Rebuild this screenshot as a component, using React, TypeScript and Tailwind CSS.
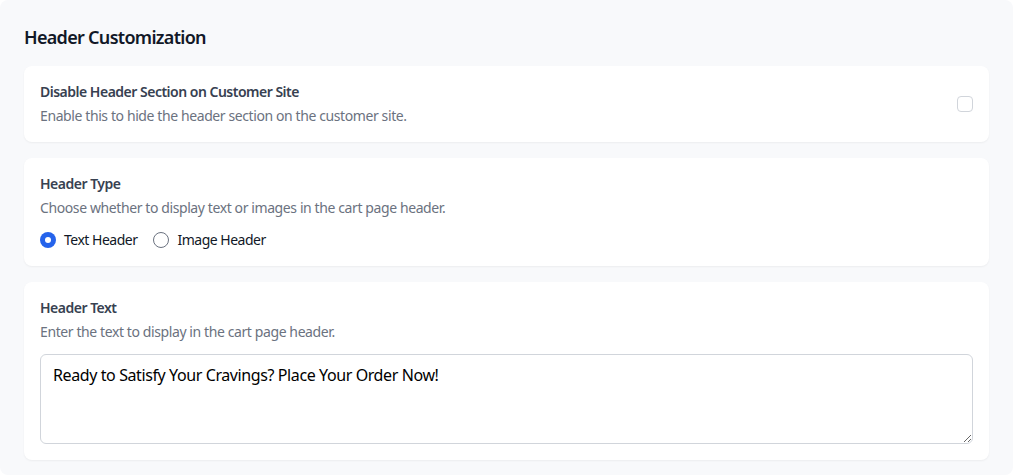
import { useState } from 'react'

const font = { fontFamily: '"Noto Sans", "Open Sans", sans-serif' }

function Card({ children, className = '' }: { children: React.ReactNode; className?: string }) {
  return (
    <div className={`rounded-lg bg-white p-4 shadow-[0_1px_2px_rgba(0,0,0,0.05)] ${className}`}>
      {children}
    </div>
  )
}

function Title({ children }: { children: React.ReactNode }) {
  return <p className="text-sm leading-5 font-semibold tracking-[-0.5px] text-[#374151]">{children}</p>
}

function Radio({ checked, label, onClick }: { checked: boolean; label: string; onClick: () => void }) {
  return (
    <label className="flex items-center gap-2 cursor-pointer" onClick={onClick}>
      {checked ? (
        <span className="flex h-4 w-4 items-center justify-center rounded-full bg-[#2563eb]">
          <span className="h-1.5 w-1.5 rounded-full bg-white" />
        </span>
      ) : (
        <span className="h-4 w-4 rounded-full border border-[#6b7280] bg-white" />
      )}
      <span className="text-sm leading-5 tracking-[-0.5px] text-[#111827]">{label}</span>
    </label>
  )
}

export default function App() {
  const [type, setType] = useState<'text' | 'image'>('text')
  const [disabled, setDisabled] = useState(false)

  return (
    <div className="min-h-screen bg-white tracking-[-0.4px]" style={font}>
      <div className="w-[1013px] h-[475px] rounded-lg bg-[#f8f9fb] p-6">
        <h2 className="text-lg leading-[26px] tracking-[-0.7px] font-semibold text-[#111827] mb-4">Header Customization</h2>

        <div className="flex flex-col gap-4">
          <Card className="flex items-center justify-between">
            <div>
              <Title>Disable Header Section on Customer Site</Title>
              <p className="mt-1 text-sm leading-5 text-[#6b7280]">Enable this to hide the header section on the customer site.</p>
            </div>
            <button
              onClick={() => setDisabled(!disabled)}
              className={`h-4 w-4 rounded border ${disabled ? 'border-[#2563eb] bg-[#2563eb]' : 'border-[#d1d5db] bg-white'}`}
            />
          </Card>

          <Card>
            <Title>Header Type</Title>
            <p className="mt-1 text-sm leading-5 text-[#6b7280]">Choose whether to display text or images in the cart page header.</p>
            <div className="mt-3 flex items-center gap-4">
              <Radio checked={type === 'text'} label="Text Header" onClick={() => setType('text')} />
              <Radio checked={type === 'image'} label="Image Header" onClick={() => setType('image')} />
            </div>
          </Card>

          <Card>
            <Title>Header Text</Title>
            <p className="mt-1 text-sm leading-5 text-[#6b7280]">Enter the text to display in the cart page header.</p>
            <textarea
              rows={3}
              defaultValue="Ready to Satisfy Your Cravings? Place Your Order Now!"
              className="mt-3 block h-[90px] w-full rounded-md border border-[#d1d5db] px-3 py-2 text-base leading-6 tracking-[-0.4px] text-black outline-none"
              style={font}
            />
          </Card>
        </div>
      </div>
    </div>
  )
}
